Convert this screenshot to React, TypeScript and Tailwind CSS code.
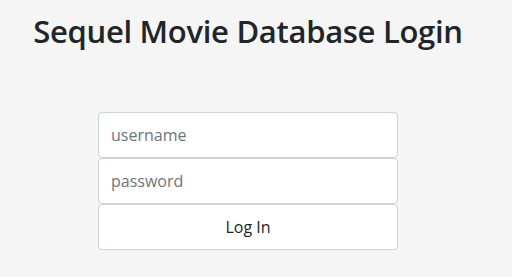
export default function App() {
  return (
    <div
      className="min-h-[277px] bg-[#f5f5f5] flex flex-col items-center pr-4 text-[#212529]"
      style={{ fontFamily: '"Open Sans", "Noto Sans", sans-serif' }}
    >
      <h1 className="mt-[11px] text-[31px] leading-[40px] font-semibold tracking-[-0.3px]">
        Sequel Movie Database Login
      </h1>
      <form className="mt-[61px] w-[300px] flex flex-col">
        <input
          type="text"
          placeholder="username"
          className="h-[46px] px-3 bg-white border border-[#ced4da] rounded-[4px] text-[16px] text-[#495057] placeholder:text-[#6c757d] outline-none"
        />
        <input
          type="password"
          placeholder="password"
          className="h-[46px] px-3 bg-white border border-[#ced4da] rounded-[4px] text-[16px] text-[#495057] placeholder:text-[#6c757d] outline-none"
        />
        <button
          type="button"
          className="h-[46px] bg-white border border-[#ced4da] rounded-[4px] text-[16px] text-[#212529]"
        >
          Log In
        </button>
      </form>
    </div>
  );
}
